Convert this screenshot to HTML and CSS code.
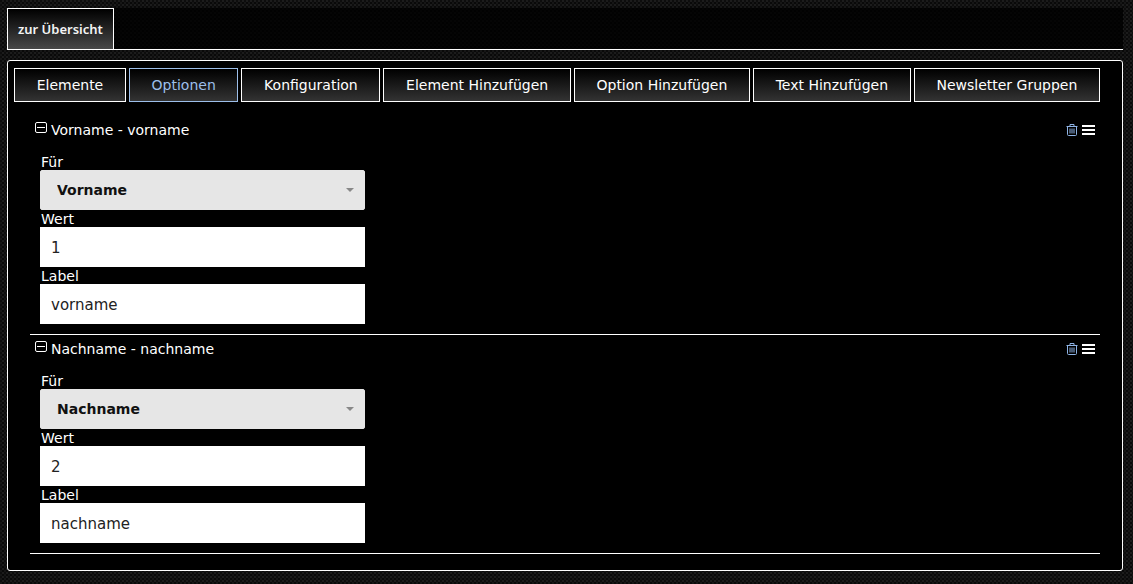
FILE: index.html
```html
<!DOCTYPE html>
<html lang="de">
<head>
<meta charset="utf-8">
<title>Newsletter Optionen</title>
<link rel="stylesheet" href="styles.css">
</head>
<body>
<svg class="symbols" aria-hidden="true">
  <symbol id="minus" viewBox="0 0 12 11"><rect x=".5" y=".5" width="11" height="10" rx="1.5" fill="none" stroke="currentColor"/><path d="M2 5.5h8" stroke="currentColor"/></symbol>
  <symbol id="trash" viewBox="0 0 12 12"><path d="M.5 2.500h11M4 2V.5h4V2M1.500 3v7.500q0 1 1 1h7q1 0 1-1V3" fill="none" stroke="currentColor"/><path d="M4 4.500v5M6 4.500v5M8 4.500v5" fill="none" stroke="currentColor"/></symbol>
  <symbol id="bars" viewBox="0 0 13 10"><path d="M0 1h13M0 5h13M0 9h13" stroke="currentColor" stroke-width="2"/></symbol>
</svg>
<header class="topbar"><a class="back" href="#">zur Übersicht</a></header>
<main class="panel">
  <nav class="tabs">
    <button class="tab">Elemente</button>
    <button class="tab active">Optionen</button>
    <button class="tab">Konfiguration</button>
    <button class="tab">Element Hinzufügen</button>
    <button class="tab">Option Hinzufügen</button>
    <button class="tab">Text Hinzufügen</button>
    <button class="tab">Newsletter Gruppen</button>
  </nav>
  <section class="item">
    <div class="item-head">
      <button class="icon toggle" aria-label="Einklappen"><svg width="12" height="11"><use href="#minus"/></svg></button>
      <h2 class="title">Vorname - vorname</h2>
      <button class="icon trash" aria-label="Löschen"><svg width="12" height="12"><use href="#trash"/></svg></button>
      <button class="icon" aria-label="Verschieben"><svg width="13" height="10"><use href="#bars"/></svg></button>
    </div>
    <div class="fields">
      <label class="label" for="fuer1">Für</label>
      <div class="select"><select id="fuer1"><option>Vorname</option></select></div>
      <label class="label" for="wert1">Wert</label>
      <input class="input" id="wert1" type="text" value="1">
      <label class="label" for="label1">Label</label>
      <input class="input" id="label1" type="text" value="vorname">
    </div>
  </section>
  <section class="item">
    <div class="item-head">
      <button class="icon toggle" aria-label="Einklappen"><svg width="12" height="11"><use href="#minus"/></svg></button>
      <h2 class="title">Nachname - nachname</h2>
      <button class="icon trash" aria-label="Löschen"><svg width="12" height="12"><use href="#trash"/></svg></button>
      <button class="icon" aria-label="Verschieben"><svg width="13" height="10"><use href="#bars"/></svg></button>
    </div>
    <div class="fields">
      <label class="label" for="fuer2">Für</label>
      <div class="select"><select id="fuer2"><option>Nachname</option></select></div>
      <label class="label" for="wert2">Wert</label>
      <input class="input" id="wert2" type="text" value="2">
      <label class="label" for="label2">Label</label>
      <input class="input" id="label2" type="text" value="nachname">
    </div>
  </section>
</main>
</body>
</html>
```
FILE: styles.css
```css
* { box-sizing: border-box; }
body {
  margin: 0;
  padding: 8px 10px 12px 7px;
  font: 14px/17px Verdana, "DejaVu Sans", sans-serif;
  color: #fff;
  background-color: #0c0c0c;
  background-image: conic-gradient(#1c1c1c 25%, #090909 0 50%, #161616 0 75%, #0d0d0d 0);
  background-size: 4px 4px;
}
.symbols { display: none; }
.topbar {
  display: flex;
  margin-bottom: 10px;
  background: rgba(0, 0, 0, .8);
  border-bottom: 1px solid #fff;
}
.back {
  padding: 12px 10px;
  border: 1px solid #fff;
  border-bottom: 0;
  background: linear-gradient(#000, #484848);
  font: 600 13px/16px "Noto Sans", sans-serif;
  color: #f4f4f4;
  text-decoration: none;
}
.panel {
  padding: 7px 22px 16px 6px;
  border: 1px solid #fff;
  border-radius: 3px;
  background: #000;
}
.tabs { display: flex; flex-wrap: wrap; gap: 3px; margin-bottom: 14px; }
.tab {
  flex: 1 1 auto;
  height: 34px;
  padding: 0 21px;
  border: 1px solid #fff;
  background: linear-gradient(#000, #333);
  color: #fff;
  font: inherit;
}
.tab.active { border-color: #9dbfea; color: #9dbfea; }
.item {
  margin-left: 16px;
  padding-bottom: 10px;
  border-bottom: 1px solid #fff;
}
.item-head { display: flex; align-items: center; gap: 4px; padding: 5px 5px 15px; }
.title { flex: 1; margin: 0; padding-top: 1px; font-size: 14px; line-height: 16px; font-weight: 400; }
.icon { display: flex; padding: 0; border: 0; background: none; color: #fff; }
.toggle { padding-bottom: 4px; }
.trash { color: #8fb4e6; }
.fields { display: flex; flex-direction: column; width: 325px; margin-left: 10px; }
.label { padding: 1px 0 0 1px; line-height: 16px; }
.select { position: relative; }
.select select {
  appearance: none;
  display: block;
  width: 100%;
  height: 40px;
  padding: 0 16px;
  border: 1px solid #e6e6e6;
  border-radius: 2px;
  background: #e6e6e6;
  color: #111;
  font: bold 14px/17px Verdana, "DejaVu Sans", sans-serif;
}
.select::after {
  content: "";
  position: absolute;
  right: 11px;
  top: 18px;
  border: 4px solid transparent;
  border-top-color: #888;
  border-bottom: 0;
  pointer-events: none;
}
.input {
  width: 100%;
  height: 40px;
  padding: 1px 11px 0;
  border: 0;
  background: #fff;
  color: #222;
  font: 15px/18px Verdana, "DejaVu Sans", sans-serif;
}
```
